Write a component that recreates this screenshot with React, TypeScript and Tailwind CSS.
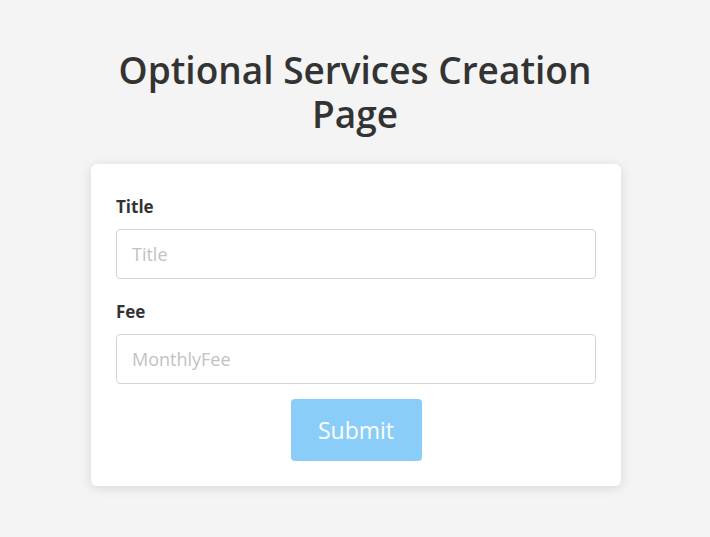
export default function App() {
  return (
    <div
      className="min-h-[537px] bg-[#f4f4f4] flex flex-col items-center pt-[48px]"
      style={{ fontFamily: '"Open Sans", "Noto Sans", sans-serif' }}
    >
      <h1 className="text-[37px] leading-[44px] font-semibold text-[#333] text-center w-[500px]">
        Optional Services Creation Page
      </h1>
      <form className="mt-[28px] ml-[2px] w-[530px] bg-white rounded-md shadow-[0_2px_12px_rgba(0,0,0,0.12)] px-[25px] pt-[31px] pb-[25px] flex flex-col">
        <label className="text-[17px] font-bold text-[#333] leading-[24px]">Title</label>
        <input
          placeholder="Title"
          className="mt-[10px] h-[50px] border border-[#d5d5d5] rounded-[4px] px-[15px] text-[18px] text-[#333] placeholder:text-[#c2c2c2] outline-none"
        />
        <label className="mt-[21px] text-[17px] font-bold text-[#333] leading-[24px]">Fee</label>
        <input
          placeholder="MonthlyFee"
          className="mt-[10px] h-[50px] border border-[#d5d5d5] rounded-[4px] px-[15px] text-[18px] text-[#333] placeholder:text-[#c2c2c2] outline-none"
        />
        <button
          type="button"
          className="mt-[15px] self-center w-[131px] h-[62px] bg-[#8bcdf9] rounded-[4px] text-white text-[23px]"
        >
          Submit
        </button>
      </form>
    </div>
  );
}
